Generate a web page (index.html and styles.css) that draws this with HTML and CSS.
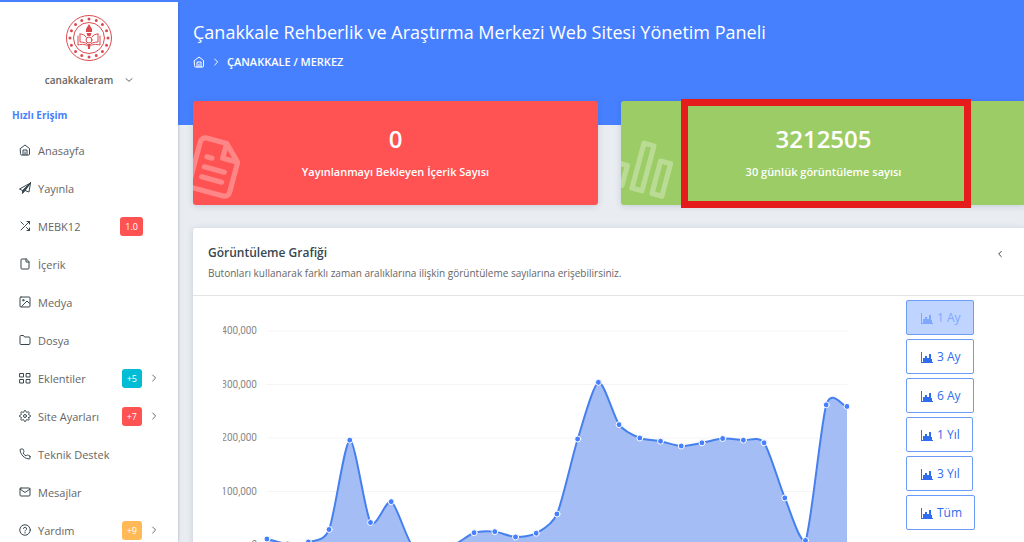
FILE: index.html
```
<!DOCTYPE html>
<html lang="tr">

<head>
  <meta charset="UTF-8">
  <meta name="viewport" content="width=device-width, initial-scale=1.0">
  <title>Yönetim Paneli</title>
  <link rel="stylesheet" href="styles.css">
</head>

<body>
  <aside class="sidebar">
    <div class="user">
      <svg class="logo" viewBox="0 0 48 48" role="img" aria-label="MEB">
        <circle cx="24" cy="24" r="22.5" />
        <circle cx="24" cy="24" r="15.5" />
        <circle class="logo-stars" cx="24" cy="24" r="19" pathLength="160" />
        <path d="M13 22v9c4-1 8-1 11 2 3-3 7-3 11-2v-9M15 20v8c4 0 7 1 9 4 2-3 5-4 9-4v-8M15 20c3 0 5 1 6 3M33 20c-3 0-5 1-6 3" />
        <circle cx="24" cy="26" r="3" />
        <path class="logo-fill" d="M24 10l3 5v3h-6v-3zM21.500 19h5l-1 3h-3zM23 30h2v5h-2z" />
      </svg>
      <button class="user-name" type="button">canakkaleram
        <svg class="arrow" viewBox="0 0 24 24"><path d="M3 8l9 8 9-8" /></svg>
      </button>
    </div>

    <h2 class="menu-title">Hızlı Erişim</h2>
    <ul class="menu">
      <li><a href="#">
        <svg class="icon" viewBox="0 0 24 24"><path d="M3 9l9-7 9 7v11a2 2 0 0 1-2 2H5a2 2 0 0 1-2-2z M8 22V12h8v10 M12 22v-6" /></svg>
        Anasayfa</a></li>
      <li><a href="#">
        <svg class="icon" viewBox="0 0 24 24"><path d="M23 2L1 14l6 3zM23 2l-3 18-8-3z" /><path class="solid" d="M23 2L7 17v6l5-6z" /></svg>
        Yayınla</a></li>
      <li><a href="#">
        <svg class="icon" viewBox="0 0 24 24"><path d="M16 3h5v5M4 20L21 3M21 16v5h-5M15 15l6 6M4 4l5 5" /></svg>
        MEBK12</a><span class="badge red">1.0</span></li>
      <li><a href="#">
        <svg class="icon" viewBox="0 0 24 24"><path d="M14 2H6a2 2 0 0 0-2 2v16a2 2 0 0 0 2 2h12a2 2 0 0 0 2-2V8zM14 2v6h6" /></svg>
        İçerik</a></li>
      <li><a href="#">
        <svg class="icon" viewBox="0 0 24 24"><rect x="2" y="2" width="20" height="20" rx="2" /><circle cx="8.500" cy="8.500" r="1.500" /><path d="M21 15l-5-5L5 21" /></svg>
        Medya</a></li>
      <li><a href="#">
        <svg class="icon" viewBox="0 0 24 24"><path d="M22 19a2 2 0 0 1-2 2H4a2 2 0 0 1-2-2V5a2 2 0 0 1 2-2h5l2 3h9a2 2 0 0 1 2 2z" /></svg>
        Dosya</a></li>
      <li><a href="#">
        <svg class="icon" viewBox="0 0 24 24"><path d="M2 3h7v7H2zM15 3h7v7h-7zM15 15h7v7h-7zM2 15h7v7H2z" /></svg>
        Eklentiler</a><span class="badge cyan">+5</span>
        <svg class="arrow" viewBox="0 0 24 24"><path d="M8 3l9 9-9 9" /></svg></li>
      <li><a href="#">
        <svg class="icon" viewBox="0 0 24 24"><circle cx="12" cy="12" r="3" /><path d="M19.400 15a1.650 1.650 0 0 0 .33 1.820l.06.06a2 2 0 0 1-2.830 2.830l-.06-.06a1.650 1.650 0 0 0-2.820 1.180V21a2 2 0 0 1-4 0v-.09A1.650 1.650 0 0 0 7.180 19.730l-.06.06a2 2 0 0 1-2.830-2.830l.06-.06A1.650 1.650 0 0 0 3.090 14H3a2 2 0 0 1 0-4h.09A1.650 1.650 0 0 0 4.270 7.180l-.06-.06a2 2 0 0 1 2.830-2.830l.06.06A1.650 1.650 0 0 0 10 3.090V3a2 2 0 0 1 4 0v.09a1.650 1.650 0 0 0 2.820 1.180l.06-.06a2 2 0 0 1 2.830 2.830l-.06.06A1.650 1.650 0 0 0 20.910 10H21a2 2 0 0 1 0 4h-.09a1.650 1.650 0 0 0-1.510 1z" /></svg>
        Site Ayarları</a><span class="badge red">+7</span>
        <svg class="arrow" viewBox="0 0 24 24"><path d="M8 3l9 9-9 9" /></svg></li>
      <li><a href="#">
        <svg class="icon" viewBox="0 0 24 24"><path d="M22 16.920v3a2 2 0 0 1-2.180 2 19.790 19.790 0 0 1-8.630-3.070 19.500 19.500 0 0 1-6-6 19.790 19.790 0 0 1-3.070-8.670A2 2 0 0 1 4.110 2h3a2 2 0 0 1 2 1.720 12.840 12.840 0 0 0 .7 2.810 2 2 0 0 1-.45 2.110L8.090 9.910a16 16 0 0 0 6 6l1.270-1.270a2 2 0 0 1 2.110-.45 12.840 12.840 0 0 0 2.810.7A2 2 0 0 1 22 16.920z" /></svg>
        Teknik Destek</a></li>
      <li><a href="#">
        <svg class="icon" viewBox="0 0 24 24"><rect x="2" y="4" width="20" height="16" rx="2" /><path d="M22 6l-10 7L2 6" /></svg>
        Mesajlar</a></li>
      <li><a href="#">
        <svg class="icon" viewBox="0 0 24 24"><circle cx="12" cy="12" r="10.500" /><path d="M9 9a3 3 0 0 1 6 1c0 2-3 2.500-3 4M12 17v1" /></svg>
        Yardım</a><span class="badge orange">+9</span>
        <svg class="arrow" viewBox="0 0 24 24"><path d="M8 3l9 9-9 9" /></svg></li>
    </ul>
  </aside>

  <main class="main">
    <header class="page-header">
      <h1>Çanakkale Rehberlik ve Araştırma Merkezi Web Sitesi Yönetim Paneli</h1>
      <nav class="breadcrumb">
        <a href="#" aria-label="Anasayfa"><svg class="icon" viewBox="0 0 24 24"><path d="M3 9l9-7 9 7v11a2 2 0 0 1-2 2H5a2 2 0 0 1-2-2z M8 22V12h8v10 M12 22v-6" /></svg></a>
        <svg class="arrow" viewBox="0 0 24 24"><path d="M8 3l9 9-9 9" /></svg>
        <a href="#">ÇANAKKALE / MERKEZ</a>
      </nav>
    </header>

    <div class="content">
      <div class="cards">
        <div class="card-wrap">
          <section class="card red">
            <svg class="card-icon" viewBox="0 0 24 24"><path d="M14 2H6a2 2 0 0 0-2 2v16a2 2 0 0 0 2 2h12a2 2 0 0 0 2-2V8zM14 2v6h6M16 13H8M16 17H8M10 9H8" /></svg>
            <div class="card-number">0</div>
            <div class="card-label">Yayınlanmayı Bekleyen İçerik Sayısı</div>
          </section>
        </div>
        <div class="card-wrap">
          <section class="card green">
            <svg class="card-icon" viewBox="0 0 24 24"><path d="M2 13h4v8H2zM10 3h4v18h-4zM18 8h4v13h-4z" /></svg>
            <div class="card-number">3212505</div>
            <div class="card-label">30 günlük görüntüleme sayısı</div>
          </section>
          <div class="highlight"></div>
        </div>
      </div>

      <section class="panel">
        <div class="panel-header">
          <div>
            <h2>Görüntüleme Grafiği</h2>
            <p>Butonları kullanarak farklı zaman aralıklarına ilişkin görüntüleme sayılarına erişebilirsiniz.</p>
          </div>
          <button class="collapse" type="button" aria-label="Daralt"><svg class="arrow" viewBox="0 0 24 24"><path d="M16 4l-8 8 8 8" /></svg></button>
        </div>
        <div class="panel-body">
          <svg class="chart" id="chart"></svg>
          <div class="ranges" id="ranges">
            <button type="button" disabled>1 Ay</button>
            <button type="button">3 Ay</button>
            <button type="button">6 Ay</button>
            <button type="button">1 Yıl</button>
            <button type="button">3 Yıl</button>
            <button type="button">Tüm</button>
          </div>
        </div>
      </section>
    </div>
  </main>

  <script src="chart.js"></script>
</body>

</html>
```
FILE: styles.css
```
* {
  box-sizing: border-box;
}

body {
  margin: 0;
  display: flex;
  height: 100vh;
  overflow: hidden;
  background: #e9edf2;
  border-top: 2px solid #4680ff;
  font-family: "Open Sans", sans-serif;
  font-size: 11px;
  color: #666;
}

a {
  color: inherit;
  text-decoration: none;
}

button {
  font-family: inherit;
  cursor: pointer;
}

h1, h2, p, ul {
  margin: 0;
  padding: 0;
}

svg {
  fill: none;
  stroke: currentColor;
  stroke-width: 2;
  stroke-linecap: round;
  stroke-linejoin: round;
  flex: none;
}

.icon {
  width: 12px;
  height: 12px;
}

.arrow {
  width: 8px;
  height: 8px;
  stroke-width: 3;
}

/* sidebar */
.sidebar {
  position: relative;
  flex: none;
  width: 178px;
  background: #fff;
  box-shadow: 0 0 3px rgba(60, 70, 110, 0.4);
  z-index: 1;
}

.user {
  display: flex;
  flex-direction: column;
  align-items: center;
  padding-top: 12px;
}

.logo {
  width: 48px;
  height: 48px;
  color: #dc4a50;
  stroke-width: 1;
}

.logo-stars {
  stroke-width: 3;
  stroke-dasharray: 0 10;
}

.logo-fill {
  fill: currentColor;
  stroke: none;
}

.user-name {
  display: flex;
  align-items: center;
  gap: 12px;
  margin-top: 8px;
  padding: 0;
  border: 0;
  background: none;
  font-size: 10px;
  font-weight: 600;
  line-height: 20px;
  color: #666;
}

.menu-title {
  margin: 15px 12px 6px;
  font-size: 10px;
  line-height: 20px;
  color: #4680ff;
}

.menu {
  list-style: none;
}

.menu li {
  display: flex;
  align-items: center;
  gap: 8px;
  height: 38px;
  padding-left: 19px;
}

.menu a {
  display: flex;
  align-items: center;
  gap: 7px;
}

.menu .icon {
  color: #37474f;
}

.menu .solid {
  fill: currentColor;
}

.badge {
  margin-left: auto;
  padding: 0 5px;
  border-radius: 3px;
  font-size: 9px;
  line-height: 19px;
  color: #fff;
}

.badge:last-child {
  margin-right: 35px;
}

.menu .arrow {
  margin-right: 20px;
}

.red {
  background: #ff5252;
}

.cyan {
  background: #00bcd4;
}

.orange {
  background: #ffba57;
}

.green {
  background: #9ccc65;
}

/* header */
.main {
  flex: 1;
  min-width: 0;
}

.page-header {
  height: 123px;
  padding: 16px 15px;
  background: #4680ff;
  color: #fff;
}

.page-header h1 {
  font-size: 18px;
  font-weight: 400;
  line-height: 28px;
}

.breadcrumb {
  display: flex;
  align-items: center;
  gap: 7px;
  margin-top: 6px;
  font-size: 11px;
  font-weight: 600;
  line-height: 20px;
}

.breadcrumb a {
  display: flex;
}

.content {
  margin: -24px -2px 0 15px;
}

/* cards */
.cards {
  display: grid;
  grid-template-columns: 1fr 1fr;
  gap: 23px;
}

.card-wrap {
  position: relative;
}

.card {
  position: relative;
  height: 104px;
  padding-top: 20px;
  overflow: hidden;
  border-radius: 3px;
  box-shadow: 0 1px 6px rgba(60, 70, 110, 0.2);
  text-align: center;
  color: #fff;
}

.card-number {
  font-size: 24px;
  font-weight: 600;
  line-height: 36px;
}

.card-label {
  margin-top: 5px;
  font-size: 11px;
  font-weight: 600;
  line-height: 20px;
}

.card-icon {
  position: absolute;
  left: -9px;
  bottom: 7px;
  width: 62px;
  height: 62px;
  opacity: 0.3;
  transform: rotate(15deg);
}

/* frame over the card */
.highlight {
  position: absolute;
  top: -2px;
  bottom: -3px;
  left: 60px;
  width: 290px;
  border: 7px solid #e51c1c;
}

/* chart panel */
.panel {
  margin-top: 23px;
  background: #fff;
  border-radius: 3px;
  box-shadow: 0 1px 6px rgba(60, 70, 110, 0.2);
}

.panel-header {
  display: flex;
  justify-content: space-between;
  align-items: flex-start;
  height: 68px;
  padding: 15px 22px 0 15px;
  border-bottom: 1px solid #e2e5e8;
}

.panel-header h2 {
  font-size: 12px;
  font-weight: 600;
  line-height: 20px;
  color: #37474f;
}

.panel-header p {
  font-size: 10px;
  line-height: 20px;
}

.collapse {
  padding: 6px 0;
  border: 0;
  background: none;
  line-height: 8px;
  color: #37474f;
}

.panel-body {
  display: flex;
  padding: 4px 50px 24px 30px;
}

.chart {
  flex: 1;
  min-width: 0;
  height: 280px;
}

.chart text {
  fill: #888;
  stroke: none;
  font-family: Roboto, sans-serif;
  font-size: 10px;
  text-anchor: end;
}

.chart .grid {
  stroke: #f5f5f5;
  stroke-width: 1;
}

.chart .area {
  fill: #a4bdf4;
  stroke: none;
}

.chart .line {
  stroke: #4680ee;
}

.chart .dot {
  fill: #4680ff;
  stroke: #fff;
  stroke-width: 1;
}

.ranges {
  display: flex;
  flex-direction: column;
  align-items: flex-start;
  gap: 4px;
  width: 70px;
  margin-left: 52px;
}

.ranges button {
  display: flex;
  align-items: center;
  gap: 4px;
  height: 35px;
  padding: 0 12px 0 14px;
  border: 1px solid #6b9df8;
  border-radius: 2px;
  background: #fff;
  font-size: 12px;
  color: #2f6cf0;
}

.ranges svg {
  width: 12px;
  height: 12px;
  stroke: none;
  fill: currentColor;
}

.ranges button:disabled {
  background: #bfd4ff;
  color: #7ea8ff;
}
```
FILE: chart.js
```
const values = [
  11200, 2000, 5500, 29000, 196000, 42000, 81000, 0, 0, 0,
  23000, 25000, 15000, 22000, 58000, 198000, 304000, 225000, 200000, 194000,
  185000, 191000, 199000, 196000, 191000, 88000, 8500, 262000, 259000
];

const svg = document.getElementById('chart');
const top400 = 31;
const bottom = 245;
const left = 44;

function drawChart() {
  const right = svg.clientWidth - 7;
  const step = (right - left) / (values.length - 1);
  const points = values.map((v, i) => ({
    x: left + i * step,
    y: bottom - v / 400000 * (bottom - top400)
  }));

  const slopes = points.map((p, i) => {
    const a = points[i - 1] || p;
    const b = points[i + 1] || p;
    return (b.y - a.y) / (b.x - a.x);
  });

  // smooth curve, never below the zero line
  let line = `M${points[0].x},${points[0].y}`;
  for (let i = 1; i < points.length; i++) {
    const a = points[i - 1];
    const b = points[i];
    const dx = (b.x - a.x) / 4;
    const y1 = Math.min(bottom, a.y + dx * slopes[i - 1]);
    const y2 = Math.min(bottom, b.y - dx * slopes[i]);
    line += `C${a.x + dx},${y1},${b.x - dx},${y2},${b.x},${b.y}`;
  }

  let html = '';
  for (let v = 0; v <= 400000; v += 100000) {
    const y = bottom - v / 400000 * (bottom - top400);
    html += `<path class="grid" d="M${left},${y}H${right}" />`;
    html += `<text x="${left - 10}" y="${y + 3}">${v.toLocaleString('en-US')}</text>`;
  }
  html += `<path class="area" d="${line}V${bottom}H${left}Z" />`;
  html += `<path class="line" d="${line}" />`;
  points.forEach(p => {
    html += `<circle class="dot" cx="${p.x}" cy="${p.y}" r="3" />`;
  });
  svg.innerHTML = html;
}

// bar chart icon on every range button
document.querySelectorAll('#ranges button').forEach(btn => {
  btn.insertAdjacentHTML('afterbegin',
    '<svg viewBox="0 0 12 12"><path d="M0 1h1v10h11v1H0zM2 7h2v4H2zM4 5h2v6H4zM6 7h2v4H6zM8 3h2v8H8zM10 8h1v3h-1z" /></svg>');
});

drawChart();
window.addEventListener('resize', drawChart);
```
